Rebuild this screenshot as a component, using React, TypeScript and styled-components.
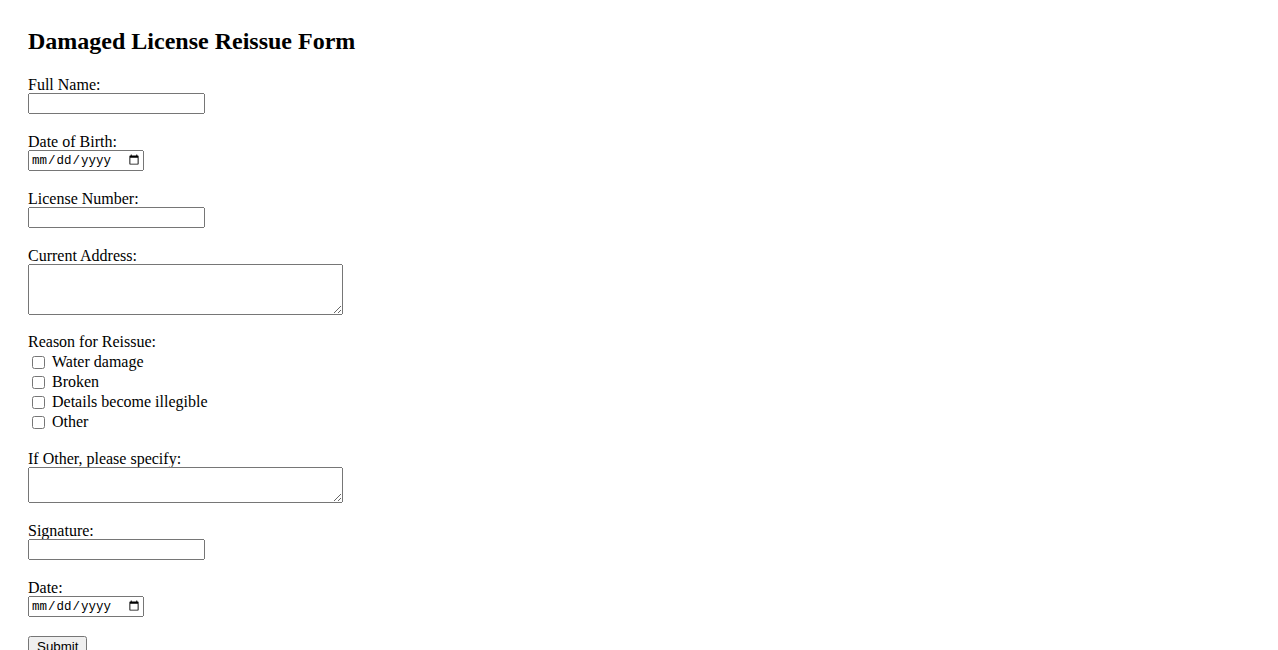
import React from 'react'
import styled, { createGlobalStyle } from 'styled-components'

const GlobalStyle = createGlobalStyle`
    body {
        margin: 8px;
        background: #ffffff;
        color: #000000;
        font-family: 'Liberation Serif', 'Times New Roman', serif;
        font-size: 16px;
    }
`

const FormContainer = styled.div`
    margin: 20px;
`

const Title = styled.h2`
    font-size: 24px;
    font-weight: 700;
    margin: 20px 0px 22px 0px;
    line-height: 26px;
`

const Field = styled.div<{ space?: number }>`
    display: flex;
    flex-direction: column;
    align-items: flex-start;
    margin-bottom: ${props => props.space ? props.space : 19}px;
`

const Label = styled.label<{ gap?: number }>`
    display: block;
    line-height: 17px;
    margin-bottom: ${props => props.gap ? props.gap : 0}px;
`

const TextInput = styled.input`
    box-sizing: border-box;
    width: 177px;
    height: 21px;
    margin: 0px;
    font-family: 'Liberation Sans', Arial, sans-serif;
    font-size: 13.33px;
`

const DateInput = styled.input`
    box-sizing: border-box;
    width: 116px;
    height: 21px;
    margin: 0px;
    font-family: 'Liberation Mono', 'DejaVu Sans Mono', monospace;
    font-size: 12.5px;
`

const Area = styled.textarea<{ h: number }>`
    box-sizing: border-box;
    width: 315px;
    height: ${props => props.h}px;
    margin: 0px;
    font-family: 'Liberation Mono', monospace;
    font-size: 13.33px;
`

const CheckRow = styled.label`
    display: flex;
    align-items: center;
    height: 20px;
`

const Check = styled.input`
    width: 13px;
    height: 13px;
    margin: 0px 7px 0px 4px;
`

const SubmitButton = styled.button`
    font-family: 'Liberation Sans', Arial, sans-serif;
    font-size: 13.33px;
    margin: 0px;
    padding: 1px 7px;
`

const reasons = ['Water damage', 'Broken', 'Details become illegible', 'Other']

const App: React.FC = () => {
    return (
        <>
            <GlobalStyle />
            <FormContainer>
                <Title>Damaged License Reissue Form</Title>
                <form onSubmit={e => e.preventDefault()}>
                    <Field>
                        <Label htmlFor="name">Full Name:</Label>
                        <TextInput id="name" type="text" />
                    </Field>
                    <Field>
                        <Label htmlFor="dob">Date of Birth:</Label>
                        <DateInput id="dob" type="date" />
                    </Field>
                    <Field>
                        <Label htmlFor="license">License Number:</Label>
                        <TextInput id="license" type="text" />
                    </Field>
                    <Field space={18}>
                        <Label htmlFor="address">Current Address:</Label>
                        <Area id="address" h={51} />
                    </Field>
                    <Field space={18}>
                        <Label gap={2}>Reason for Reissue:</Label>
                        {reasons.map(r => (
                            <CheckRow key={r}>
                                <Check type="checkbox" />
                                {r}
                            </CheckRow>
                        ))}
                    </Field>
                    <Field>
                        <Label htmlFor="other">If Other, please specify:</Label>
                        <Area id="other" h={36} />
                    </Field>
                    <Field>
                        <Label htmlFor="signature">Signature:</Label>
                        <TextInput id="signature" type="text" />
                    </Field>
                    <Field>
                        <Label htmlFor="date">Date:</Label>
                        <DateInput id="date" type="date" />
                    </Field>
                    <SubmitButton type="submit">Submit</SubmitButton>
                </form>
            </FormContainer>
        </>
    )
}

export default App
